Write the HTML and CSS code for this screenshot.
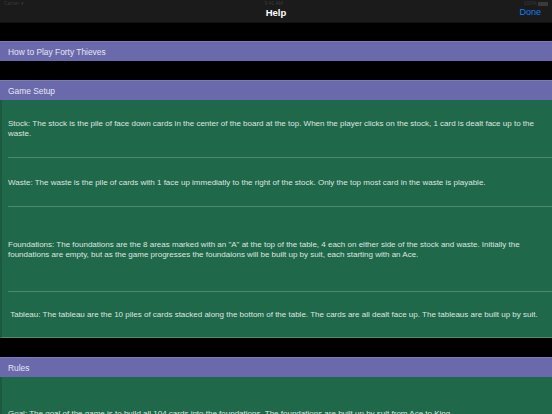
FILE: index.html
```html
<!DOCTYPE html>
<html lang="en">
<head>
  <meta charset="UTF-8">
  <title>Help</title>
  <link rel="stylesheet" href="styles.css">
</head>
<body>

  <header class="topbar">
    <div class="status">
      <span class="carrier">Carrier &#9662;</span>
      <span class="clock">9:41 AM</span>
      <span class="battery">100% <i class="batt"></i></span>
    </div>
    <div class="nav">
      <h1>Help</h1>
      <a class="done" href="#">Done</a>
    </div>
  </header>

  <section class="group">
    <h2 class="group-title">How to Play Forty Thieves</h2>
  </section>

  <section class="group">
    <h2 class="group-title">Game Setup</h2>
    <div class="rows">
      <div class="row row-stock"><p>Stock: The stock is the pile of face down cards in the center of the board at the top. When the player clicks on the stock, 1 card is dealt face up to the waste.</p></div>
      <div class="row row-waste"><p>Waste: The waste is the pile of cards with 1 face up immediatly to the right of the stock. Only the top most card in the waste is playable.</p></div>
      <div class="row row-found"><p>Foundations: The foundations are the 8 areas marked with an "A" at the top of the table, 4 each on either side of the stock and waste. Initially the foundations are empty, but as the game progresses the foundaions will be built up by suit, each starting with an Ace.</p></div>
      <div class="row row-tableau"><p>&nbsp;Tableau: The tableau are the 10 piles of cards stacked along the bottom of the table. The cards are all dealt face up. The tableaus are built up by suit.</p></div>
    </div>
  </section>

  <section class="group">
    <h2 class="group-title">Rules</h2>
    <div class="rows">
      <div class="row row-goal"><p>Goal: The goal of the game is to build all 104 cards into the foundations. The foundations are built up by suit from Ace to King.</p></div>
    </div>
  </section>

</body>
</html>
```

FILE: styles.css
```css
* {
  margin: 0;
  padding: 0;
  box-sizing: border-box;
}

body {
  background: #000;
  color: #dde5e1;
  font-family: 'Liberation Sans', Helvetica, Arial, sans-serif;
  font-size: 8px;
  height: 414px;
  overflow: hidden;
}

.topbar {
  background: #1b1b1b;
  height: 23px;
  border-bottom: 1px solid #121212;
}

.status {
  display: flex;
  justify-content: space-between;
  padding: 0 4px;
  font-size: 5px;
  line-height: 6px;
  color: #3a3a3a;
  height: 4px;
  overflow: visible;
}

.batt {
  display: inline-block;
  width: 10px;
  height: 4px;
  background: #3a3a3a;
  vertical-align: middle;
}

.nav {
  display: flex;
  justify-content: center;
  align-items: center;
  height: 16px;
  position: relative;
}

.nav h1 {
  font-size: 9.5px;
  font-weight: bold;
  color: #fff;
}

.done {
  position: absolute;
  right: 11px;
  top: 3px;
  color: #1a7cf2;
  text-decoration: none;
  font-size: 9px;
}

.group {
  margin-top: 18px;
}

.group + .group {
  margin-top: 19px;
}

.group-title {
  background: #6a69ab;
  border-top: 1px solid #7d7cb8;
  height: 20px;
  padding: 0 8px;
  display: flex;
  align-items: center;
  font-size: 8.4px;
  font-weight: normal;
  color: #e6e6f2;
}

.rows {
  background: #20684a;
  border-left: 2px solid #1b5a40;
  border-bottom: 1px solid #4f8c70;
}

.row {
  display: flex;
  align-items: center;
  padding: 0 8px 0 6px;
  position: relative;
  line-height: 10px;
}

.row::after {
  content: '';
  position: absolute;
  left: 6px;
  right: 0;
  bottom: 0;
  height: 1px;
  background: #4b8a6c;
}

.row:last-child::after {
  display: none;
}

.row-stock { height: 58px; }
.row-waste { height: 49px; }
.row-found { height: 85px; }
.row-tableau { height: 45px; }

.row-goal {
  height: 60px;
  align-items: flex-start;
  padding-top: 32px;
}
```
